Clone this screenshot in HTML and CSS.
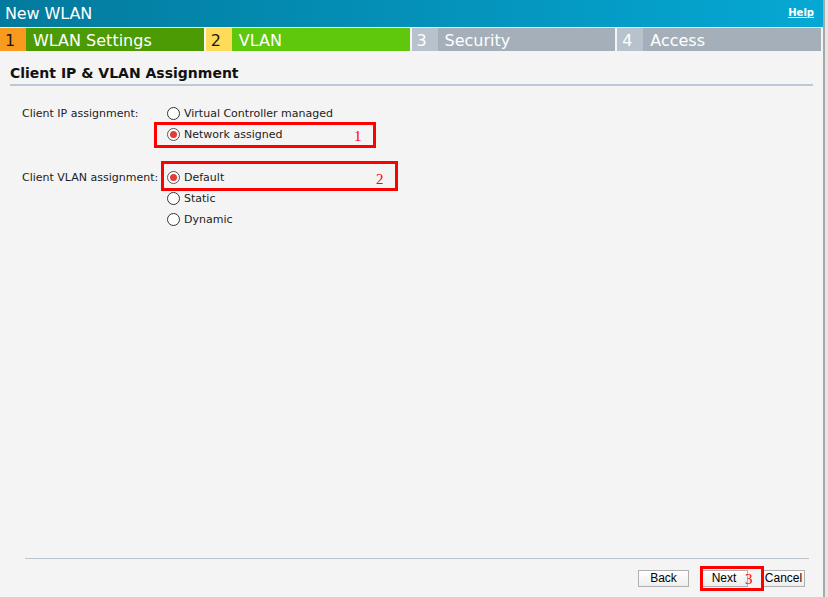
FILE: index.html
```html
<!DOCTYPE html>
<html>
<head>
<meta charset="utf-8">
<link rel="stylesheet" href="styles.css">
</head>
<body>
<div class="page">
  <div class="dialog">
    <div class="header">
      <span class="title">New WLAN</span>
      <a class="help">Help</a>
    </div>
    <div class="tabs">
      <div class="tab t1"><span class="num">1</span><span class="lbl">WLAN Settings</span></div>
      <div class="tab t2"><span class="num">2</span><span class="lbl">VLAN</span></div>
      <div class="tab t3"><span class="num">3</span><span class="lbl">Security</span></div>
      <div class="tab t4"><span class="num">4</span><span class="lbl">Access</span></div>
    </div>
    <div class="body">
      <h2 class="heading">Client IP &amp; VLAN Assignment</h2>
      <div class="form">
        <div class="row">
          <div class="label">Client IP assignment:</div>
          <div class="options">
            <label class="opt"><span class="radio"></span>Virtual Controller managed</label>
            <label class="opt"><span class="radio on"></span>Network assigned</label>
          </div>
        </div>
        <div class="row row2">
          <div class="label">Client VLAN assignment:</div>
          <div class="options">
            <label class="opt"><span class="radio on"></span>Default</label>
            <label class="opt"><span class="radio"></span>Static</label>
            <label class="opt"><span class="radio"></span>Dynamic</label>
          </div>
        </div>
      </div>
      <div class="spacer"></div>
      <div class="footer">
        <div class="buttons">
          <button class="btn b-back">Back</button>
          <button class="btn b-next">Next</button>
          <button class="btn b-cancel">Cancel</button>
        </div>
      </div>
    </div>
    <div class="mark m1"><span>1</span></div>
    <div class="mark m2"><span>2</span></div>
    <div class="mark m3"><span>3</span></div>
  </div>
  <div class="side"></div>
</div>
</body>
</html>
```
FILE: styles.css
```css
html, body {
  margin: 0;
  padding: 0;
  background: #f4f4f4;
}
.page {
  display: flex;
  width: 828px;
  height: 597px;
  overflow: hidden;
}
.dialog {
  position: relative;
  width: 823px;
  height: 597px;
  background: #f4f4f4;
  display: flex;
  flex-direction: column;
  font-family: "DejaVu Sans", Verdana, sans-serif;
}
.side {
  width: 5px;
  height: 597px;
  border-left: 2px solid #a8a8a8;
  box-sizing: border-box;
  background: #e6e6e6;
}
.header {
  height: 27px;
  background: linear-gradient(to right, #037a9d, #05a8d4);
  border-bottom: 1px solid #e8f4f8;
  display: flex;
  align-items: center;
  justify-content: space-between;
  padding: 0 9px 0 5px;
  color: #fff;
}
.title {
  font-size: 16px;
  letter-spacing: -0.1px;
}
.help {
  font-size: 10px;
  font-weight: bold;
  text-decoration: underline;
  color: #fff;
  margin-top: -2px;
}
.tabs {
  display: flex;
  gap: 2px;
  height: 23px;
  padding-right: 2px;
}
.tab {
  flex: 1;
  display: flex;
  font-size: 16px;
  color: #fff;
}
.num {
  width: 26px;
  flex: none;
  padding: 1px 0 0 5px;
  box-sizing: border-box;
  line-height: 23px;
  color: #1a1a1a;
}
.lbl {
  flex: 1;
  padding: 1px 0 0 7px;
  line-height: 23px;
}
.t1 .num { background: #f79a1e; }
.t1 .lbl { background: #4c9b04; }
.t2 .num { background: #fedb58; }
.t2 .lbl { background: #5fc70c; }
.t3 .num, .t4 .num { background: #b8c2cc; color: #fff; }
.t3 .lbl, .t4 .lbl { background: #a5afba; }
.body {
  flex: 1;
  display: flex;
  flex-direction: column;
  padding: 0 10px 0 10px;
}
.heading {
  margin: 14px 0 0 0;
  padding: 0 0 3px 0;
  font-size: 14px;
  font-weight: bold;
  color: #111;
  border-bottom: 2px solid #bcc8d6;
}
.form {
  font-size: 11px;
  color: #222;
  padding: 21px 0 0 12px;
}
.row {
  display: flex;
}
.row2 {
  margin-top: 30px;
}
.label {
  width: 145px;
  flex: none;
  line-height: 13px;
}
.options {
  display: flex;
  flex-direction: column;
  gap: 8px;
}
.opt {
  display: flex;
  align-items: center;
  height: 13px;
  line-height: 13px;
}
.radio {
  width: 11px;
  height: 11px;
  border: 1px solid #333;
  border-radius: 50%;
  background: #fff;
  margin-right: 4px;
  box-sizing: content-box;
  position: relative;
}
.radio.on {
  border-color: #555;
}
.radio.on::after {
  content: "";
  position: absolute;
  left: 2px;
  top: 2px;
  width: 7px;
  height: 7px;
  border-radius: 50%;
  background: #e33a3a;
}
.spacer {
  flex: 1;
}
.footer {
  margin: 0 4px 0 15px;
  border-top: 1px solid #bcc4cc;
  padding: 11px 0 10px 0;
}
.buttons {
  display: flex;
  justify-content: flex-end;
  padding-right: 4px;
}
.btn {
  font-family: "Liberation Sans", Arial, sans-serif;
  font-size: 12px;
  height: 17px;
  line-height: 15px;
  padding: 0;
  background: linear-gradient(#ffffff, #eeeeee);
  border: 1px solid #b0b0b0;
  color: #000;
}
.b-back { width: 51px; margin-right: 11px; }
.b-next { width: 48px; margin-right: 14px; }
.b-cancel { width: 43px; }
.mark {
  position: absolute;
  border: 3px solid #f00;
  box-sizing: border-box;
  font-family: "Liberation Serif", serif;
  color: #f00;
  font-size: 15px;
}
.mark span {
  position: absolute;
}
.m1 { left: 154px; top: 122px; width: 222px; height: 26px; }
.m1 span { left: 197px; top: 3px; }
.m2 { left: 161px; top: 161px; width: 237px; height: 30px; }
.m2 span { left: 212px; top: 7px; }
.m3 { left: 700px; top: 566px; width: 64px; height: 25px; }
.m3 span { left: 42px; top: 2px; }
```
